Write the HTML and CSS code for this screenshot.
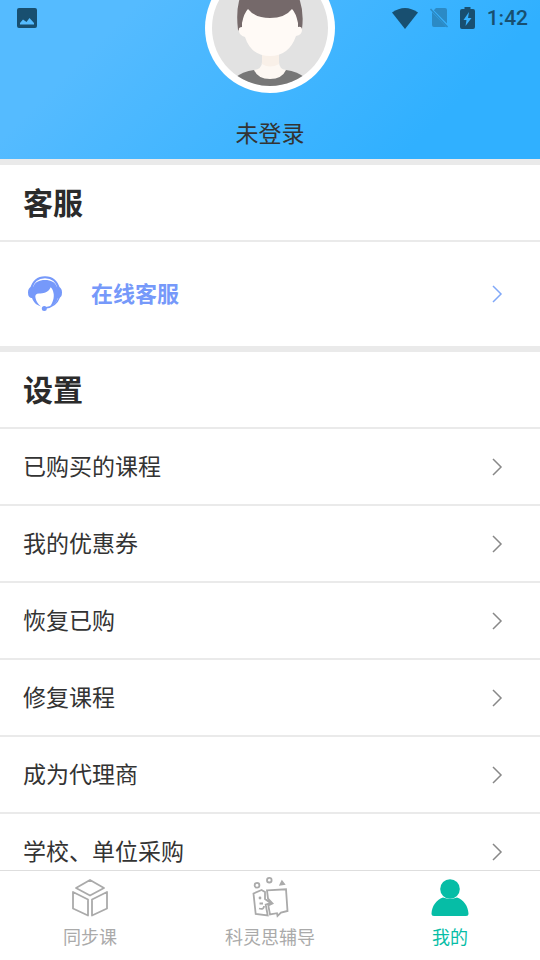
FILE: index.html
```html
<!DOCTYPE html>
<html lang="zh-CN">
<head>
<meta charset="utf-8">
<meta name="viewport" content="width=device-width, initial-scale=1">
<title>我的</title>
<link rel="stylesheet" href="styles.css">
</head>
<body>
<div class="app">
  <div class="status">
    <svg class="status-photo" width="20" height="20" viewBox="0 0 20 20" aria-hidden="true"><path fill="currentColor" fill-rule="evenodd" d="M2 0h16q2 0 2 2v16q0 2-2 2H2q-2 0-2-2V2q0-2 2-2zM3 16.500h14V15l-4.500-5-3 4L6 11.500 3 15z"/></svg>
    <svg width="26" height="21" viewBox="0 0 26 21" aria-hidden="true"><path fill="currentColor" d="M0 4.500Q13-4.500 26 4.500L13 21z"/></svg>
    <svg class="status-sim" width="18" height="20" viewBox="0 0 18 20" aria-hidden="true"><path fill="currentColor" d="M6 0h9q2 0 2 2v13.500L3.800 2.200zM2 4l14 14.500q-.5.500-1 .5H4q-2 0-2-2z"/><path fill="none" stroke="currentColor" stroke-width="1.500" d="M.5 1l17 18"/></svg>
    <svg width="15" height="22" viewBox="0 0 15 22" aria-hidden="true"><path fill="currentColor" fill-rule="evenodd" d="M4.500 0h6v2H13q2 0 2 2v16q0 2-2 2H2q-2 0-2-2V4q0-2 2-2h2.500zM9 5l-5.500 8h3L5.500 19l6-8H8z"/></svg>
    <time class="clock">1:42</time>
  </div>

  <main class="page">
    <header class="profile">
      <svg class="avatar" width="130" height="130" viewBox="0 0 130 130" role="img" aria-label="头像">
        <defs><clipPath id="face"><circle cx="65" cy="65" r="58"/></clipPath></defs>
        <circle cx="65" cy="65" r="65" fill="#fff"/>
        <circle cx="65" cy="65" r="58" fill="#e2e2e2"/>
        <g clip-path="url(#face)">
          <path fill="#777" d="M28 132V116Q38 108 49 107H81Q92 108 102 116V132z"/>
          <path fill="#fdf8f3" d="M49 107Q57 106 57 99V84H74V99Q74 106 81 107 77 116 65 116T49 107z"/>
          <path fill="#f9f0e8" d="M57 88H74V101Q65 106 57 101z"/>
          <path fill="#75696a" d="M33 67Q31 50 34 38 40 22 65 22T95 38Q99 50 97 66L90 70H38z"/>
          <path fill="#fffaf6" d="M37 60Q39 50 43 46 50 55 65 55T87 46Q91 50 93 60V64Q97 63 97 67 97 72 91 73 84 93 65 93T40 74Q34 72 34 68 33 64 37 64z"/>
        </g>
      </svg>
      <a class="login text" href="#login">未登录</a>
    </header>

    <section class="section">
      <h2 class="section-title text">客服</h2>
      <a class="row row-service" href="#service">
        <svg class="agent" width="36" height="36" viewBox="0 0 36 36" aria-hidden="true">
          <path fill="none" stroke="currentColor" stroke-width="2" d="M4 13C6 5 11 1.200 18 1.200S30 5 32 13"/>
          <path fill="currentColor" d="M4 11H6C8 6 12 4 18 4S28 6 30 11h2Q35 12 35 16.500T32 22H31C30 26 27 29 22.500 31 26 27 27.500 21 26.500 17 26 14 25 12.500 23.700 11.300 21 17 16 17.500 12 17.500 9 17.500 7.800 19 8.500 22 9.500 26 11 28 14 30.500 9 29 6.500 26 5 22H4Q1 21 1 16.500T4 11z"/>
          <path fill="none" stroke="currentColor" stroke-width="1.400" d="M32.500 21Q29 31 18 32"/>
          <circle cx="17.300" cy="32.500" r="2.500" fill="currentColor"/>
        </svg>
        <span class="row-label text">在线客服</span>
        <svg class="chevron" width="12" height="18" viewBox="0 0 12 18" aria-hidden="true"><path d="M2 1l8 8-8 8"/></svg>
      </a>
    </section>

    <section class="section">
      <h2 class="section-title text">设置</h2>
      <a class="row" href="#courses"><span class="row-label text">已购买的课程</span><svg class="chevron" width="12" height="18" viewBox="0 0 12 18" aria-hidden="true"><path d="M2 1l8 8-8 8"/></svg></a>
      <a class="row" href="#coupons"><span class="row-label text">我的优惠券</span><svg class="chevron" width="12" height="18" viewBox="0 0 12 18" aria-hidden="true"><path d="M2 1l8 8-8 8"/></svg></a>
      <a class="row" href="#restore"><span class="row-label text">恢复已购</span><svg class="chevron" width="12" height="18" viewBox="0 0 12 18" aria-hidden="true"><path d="M2 1l8 8-8 8"/></svg></a>
      <a class="row" href="#repair"><span class="row-label text">修复课程</span><svg class="chevron" width="12" height="18" viewBox="0 0 12 18" aria-hidden="true"><path d="M2 1l8 8-8 8"/></svg></a>
      <a class="row" href="#agent"><span class="row-label text">成为代理商</span><svg class="chevron" width="12" height="18" viewBox="0 0 12 18" aria-hidden="true"><path d="M2 1l8 8-8 8"/></svg></a>
      <a class="row" href="#purchase"><span class="row-label text">学校、单位采购</span><svg class="chevron" width="12" height="18" viewBox="0 0 12 18" aria-hidden="true"><path d="M2 1l8 8-8 8"/></svg></a>
    </section>
  </main>

  <nav class="tabs">
    <a class="tab" href="#sync">
      <svg width="40" height="40" viewBox="0 0 40 40" fill="none" stroke="currentColor" stroke-width="1.800" stroke-linejoin="round" aria-hidden="true"><path d="M20 2L34 10 20 17.500 6 10zM3 14L18 21.500V37.500L3 30.500zM37 14L22 21.500V37.500L37 30.500z"/></svg>
      <span>同步课</span>
    </a>
    <a class="tab" href="#tutoring">
      <svg width="40" height="40" viewBox="0 0 40 40" fill="none" stroke="currentColor" stroke-width="1.800" aria-hidden="true"><circle cx="7" cy="7.300" r="2.400"/><circle cx="19.300" cy="2.200" r="2.300"/><path d="M30.500 6.500L32 3.500 34 6z"/><path d="M11.500 12L3.500 15.500 5.700 36 17.700 37.500 15.700 26.500 20.500 25 15 21V14zM17 12.300L36 11.300 37.500 33 31 34.500 27.500 38 27 35.200 20 36.500 18.300 27.300 22.500 25.500 18 20.500z"/><path d="M9 30.500Q14 32 14 28M9.500 25.500H13"/><circle cx="10" cy="20" r="1.400" fill="currentColor" stroke="none"/></svg>
      <span>科灵思辅导</span>
    </a>
    <a class="tab tab-active" href="#me" aria-current="page">
      <svg width="40" height="40" viewBox="0 0 40 40" fill="currentColor" aria-hidden="true"><circle cx="20" cy="11" r="9.800"/><path d="M13 19.500Q20 22 27 19.500C34 22 38 28 38.500 35.500Q38.500 38 36 38H4Q1.500 38 1.500 35.500C2 28 6 22 13 19.500z"/></svg>
      <span>我的</span>
    </a>
  </nav>
</div>
</body>
</html>
```
FILE: styles.css
```css
* {
  box-sizing: border-box;
}

body {
  margin: 0;
  background: #fff;
  color: #333;
  font-family: Roboto, "Noto Sans CJK SC", sans-serif;
}

a {
  color: inherit;
  text-decoration: none;
}

svg {
  display: block;
  flex: none;
  overflow: visible;
}

/* Optical centring for CJK glyphs */
.text {
  padding-top: 2px;
}

.app {
  position: relative;
  display: flex;
  flex-direction: column;
  height: 100vh;
}

.status {
  position: absolute;
  top: 0;
  left: 0;
  right: 0;
  z-index: 1;
  display: flex;
  align-items: center;
  gap: 12px;
  height: 36px;
  padding: 0 12px 0 17px;
  color: #184f70;
}

.status-photo {
  margin-right: auto;
}

.status-sim {
  opacity: 0.4;
}

.clock {
  font-size: 21px;
  font-weight: 500;
  line-height: 38px;
}

.page {
  flex: 1;
  min-height: 0;
  overflow: hidden;
}

.profile {
  display: flex;
  flex-direction: column;
  align-items: center;
  gap: 24px;
  padding-bottom: 8px;
  background: linear-gradient(135deg, #55bbff 20%, #30b0ff 80%);
}

/* The page rests scrolled, with the top of the avatar out of view */
.avatar {
  margin-top: -37px;
}

.login {
  font-size: 23px;
  line-height: 32px;
}

.section {
  border-top: 6px solid #eaeaea;
}

.section-title {
  margin: 0;
  padding-right: 23px;
  padding-left: 23px;
  color: #2b2b2b;
  font-size: 30px;
  font-weight: 700;
  line-height: 73px;
}

.row {
  display: flex;
  align-items: center;
  justify-content: space-between;
  padding: 0 37px 0 23px;
  border-top: 2px solid #eaeaea;
  font-size: 23px;
  line-height: 73px;
}

.row-service {
  gap: 28px;
  padding-left: 27px;
  color: #7699fa;
  font-size: 22px;
  font-weight: 700;
  line-height: 102px;
}

.row-service .row-label {
  flex: 1;
}

.chevron {
  fill: none;
  stroke: #888;
  stroke-width: 1.5;
}

.row-service .chevron {
  stroke: #80a8f8;
}

.tabs {
  display: flex;
  border-top: 1px solid #dedede;
  background: #fff;
}

.tab {
  display: flex;
  flex: 1;
  flex-direction: column;
  align-items: center;
  gap: 7px;
  padding: 7px 0 9px;
  color: #aaa;
  font-size: 18px;
  line-height: 26px;
}

.tab-active {
  color: #06bda6;
}
```
